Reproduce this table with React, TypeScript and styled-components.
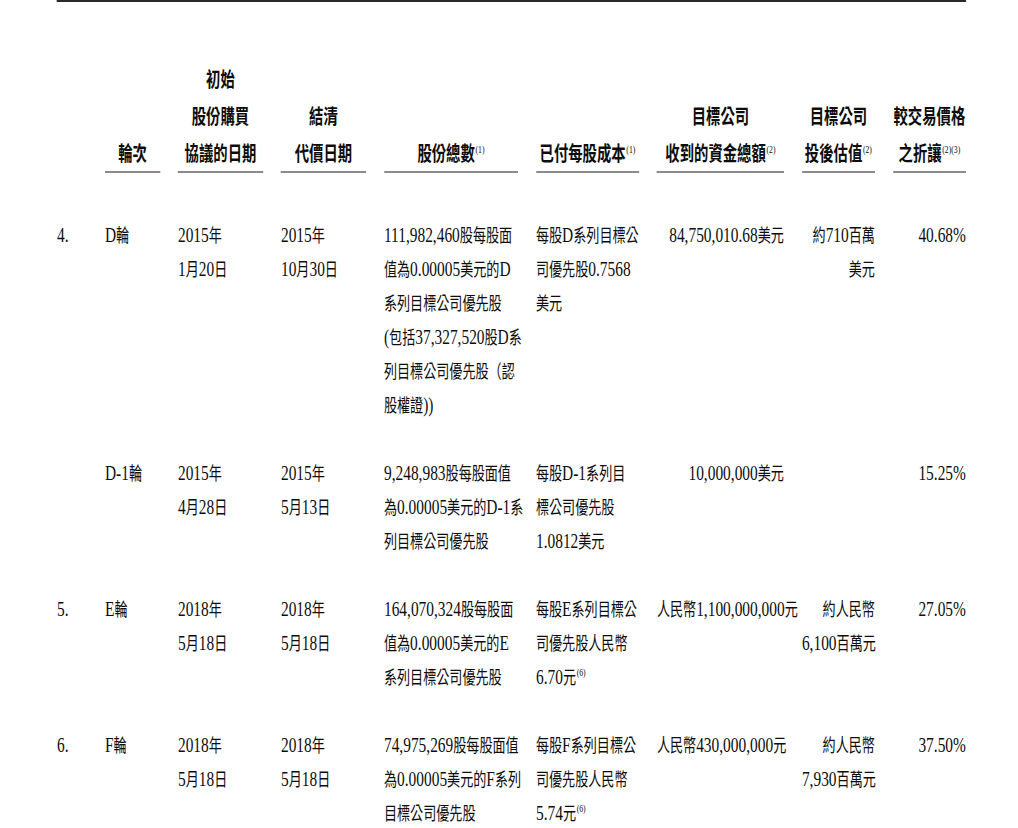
import React from "react";
import styled, { createGlobalStyle } from "styled-components";

// the source page is set in a horizontally condensed face, so the whole sheet
// is laid out wide and squeezed back with scaleX
const S = 0.7;
const u = (v: number) => `${(v / S).toFixed(2)}px`;

const COLS = [30, 55, 85, 85, 134, 103, 127, 73, 73];
const GAP = 18;
const template = COLS.map(u).join(" ");

type Align = "left" | "center" | "right";
type Line = string | [string, string];

interface RowType {
  idx: string;
  cells: Line[][];
}

const ALIGNS: Align[] = ["left", "left", "left", "left", "left", "left", "right", "right", "right"];

const HEAD: Line[][] = [
  [],
  ["輪次"],
  ["初始", "股份購買", "協議的日期"],
  ["結清", "代價日期"],
  [["股份總數", "(1)"]],
  [["已付每股成本", "(1)"]],
  ["目標公司", ["收到的資金總額", "(2)"]],
  ["目標公司", ["投後估值", "(2)"]],
  ["較交易價格", ["之折讓", "(2)(3)"]],
];

const ROWS: RowType[] = [
  {
    idx: "4.",
    cells: [
      ["D輪"],
      ["2015年", "1月20日"],
      ["2015年", "10月30日"],
      [
        "111,982,460股每股面",
        "值為0.00005美元的D",
        "系列目標公司優先股",
        "(包括37,327,520股D系",
        "列目標公司優先股（認",
        "股權證))",
      ],
      ["每股D系列目標公", "司優先股0.7568", "美元"],
      ["84,750,010.68美元"],
      ["約710百萬", "美元"],
      ["40.68%"],
    ],
  },
  {
    idx: "",
    cells: [
      ["D-1輪"],
      ["2015年", "4月28日"],
      ["2015年", "5月13日"],
      ["9,248,983股每股面值", "為0.00005美元的D-1系", "列目標公司優先股"],
      ["每股D-1系列目", "標公司優先股", "1.0812美元"],
      ["10,000,000美元"],
      [],
      ["15.25%"],
    ],
  },
  {
    idx: "5.",
    cells: [
      ["E輪"],
      ["2018年", "5月18日"],
      ["2018年", "5月18日"],
      ["164,070,324股每股面", "值為0.00005美元的E", "系列目標公司優先股"],
      ["每股E系列目標公", "司優先股人民幣", ["6.70元", "(6)"]],
      ["人民幣1,100,000,000元"],
      ["約人民幣", "6,100百萬元"],
      ["27.05%"],
    ],
  },
  {
    idx: "6.",
    cells: [
      ["F輪"],
      ["2018年", "5月18日"],
      ["2018年", "5月18日"],
      ["74,975,269股每股面值", "為0.00005美元的F系列", "目標公司優先股"],
      ["每股F系列目標公", "司優先股人民幣", ["5.74元", "(6)"]],
      ["人民幣430,000,000元"],
      ["約人民幣", "7,930百萬元"],
      ["37.50%"],
    ],
  },
];

const GlobalStyle = createGlobalStyle`
  html, body {
    margin: 0;
    padding: 0;
    background: #ffffff;
    overflow: hidden;
  }
`;

const Page = styled.div`
  width: 100%;
  height: 828px;
  overflow: hidden;
  background: #ffffff;
`;

const Sheet = styled.div`
  width: ${u(1018)};
  box-sizing: border-box;
  padding-left: ${u(57)};
  transform: scaleX(${S});
  transform-origin: 0 0;
  color: #0d0d0d;
`;

const Table = styled.div`
  width: ${u(909)};
  border-top: 2px solid #2a2a2a;
`;

const Grid = styled.div`
  display: grid;
  grid-template-columns: ${template};
  column-gap: ${u(GAP)};
`;

const HeadRow = styled(Grid)`
  margin-top: 58px;
  align-items: end;
`;

const HeadCell = styled.div<{ $rule: boolean }>`
  border-bottom: 2px solid ${p => (p.$rule ? "#8c8c8c" : "transparent")};
  text-align: center;
  font-family: "Noto Sans CJK TC", sans-serif;
  font-weight: 700;
  font-size: 20.5px;
  white-space: nowrap;
`;

const HeadLine = styled.div`
  height: 37px;
  line-height: 37px;
`;

const Body = styled.div`
  display: flex;
  flex-direction: column;
  gap: 34px;
  padding-top: 44px;
`;

const Cell = styled.div<{ $align: Align }>`
  text-align: ${p => p.$align};
  font-family: "Noto Sans CJK TC", sans-serif;
  font-size: 18.7px;
  white-space: nowrap;
`;

const TextLine = styled.div`
  height: 34px;
  line-height: 34px;
`;

const Latin = styled.span`
  font-family: "Liberation Serif", "Times New Roman", serif;
  font-size: 22px;
  line-height: 1;
`;

const Sup = styled.sup`
  font-family: "Liberation Serif", "Times New Roman", serif;
  font-size: 11px;
  font-weight: 400;
  line-height: 0;
  vertical-align: 0.75em;
  margin-left: 1px;
`;

const Mixed = ({ text }: { text: string }) => (
  <>
    {text.split(/([\x20-\x7e]+)/).map((part, i) =>
      part === "" ? null : i % 2 ? <Latin key={i}>{part}</Latin> : <span key={i}>{part}</span>,
    )}
  </>
);

const Lines = ({ lines, head }: { lines: Line[]; head?: boolean }) => {
  const Row = head ? HeadLine : TextLine;
  return (
    <>
      {lines.map((l, i) => {
        const [text, sup] = typeof l === "string" ? [l, ""] : l;
        return (
          <Row key={i}>
            <Mixed text={text} />
            {sup && <Sup>{sup}</Sup>}
          </Row>
        );
      })}
    </>
  );
};

export default function App() {
  return (
    <Page>
      <GlobalStyle />
      <Sheet>
        <Table>
          <HeadRow>
            {HEAD.map((lines, i) => (
              <HeadCell key={i} $rule={i > 0}>
                <Lines lines={lines} head />
              </HeadCell>
            ))}
          </HeadRow>
          <Body>
            {ROWS.map((row, r) => (
              <Grid key={r}>
                <Cell $align="left">
                  <Lines lines={row.idx ? [row.idx] : []} />
                </Cell>
                {row.cells.map((lines, c) => (
                  <Cell key={c} $align={ALIGNS[c + 1]}>
                    <Lines lines={lines} />
                  </Cell>
                ))}
              </Grid>
            ))}
          </Body>
        </Table>
      </Sheet>
    </Page>
  );
}
